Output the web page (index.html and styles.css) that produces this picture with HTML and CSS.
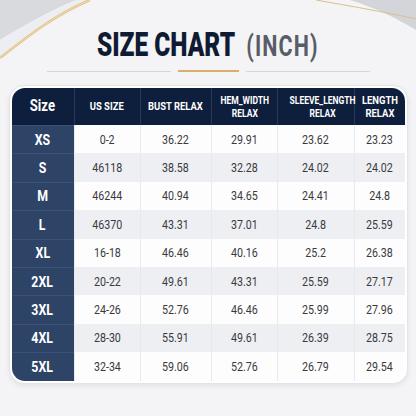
FILE: index.html
```html
<!DOCTYPE html>
<html lang="en">

<head>
  <meta charset="UTF-8">
  <meta name="viewport" content="width=device-width, initial-scale=1.0" />
  <title>Size Chart</title>
<link rel="stylesheet" href="styles.css">
</head>

<body>
  <svg class="swoosh" width="416" height="90" viewBox="0 0 416 90">
    <path d="M0 0 H76 C52 10 26 24 0 40 Z" fill="#d8dade" />
    <path d="M0 40 C26 24 52 10 76 0 H88 C56 14 28 34 0 58 Z" fill="#eceef1" />
    <path d="M0 58 C28 36 56 14 90 0" fill="none" stroke="#e0c185" stroke-width="2.5" />
    <path d="M0 58 C28 36 56 14 90 0" fill="none" stroke="#f4e4bf" stroke-width="0.8" />
    <path d="M350 0 H416 V30 C396 18 376 8 350 0 Z" fill="#d3d5da" />
    <path d="M316 0 C350 6 385 12 416 19" fill="none" stroke="#dcbf86" stroke-width="1" />
  </svg>

  <div class="page">
    <h1 class="title"><span class="title-text">SIZE CHART <span class="unit">(INCH)</span></span></h1>

    <div class="rule">
      <span class="rule-gray"></span>
      <span class="rule-gold"></span>
      <span class="rule-gray"></span>
    </div>

    <div class="card">
      <table class="chart">
        <colgroup>
          <col style="width:62px">
          <col style="width:66px">
          <col style="width:71px">
          <col style="width:66px">
          <col style="width:77px">
          <col style="width:51px">
        </colgroup>
        <thead>
          <tr>
            <th class="size-head"><span class="t">Size</span></th>
            <th><span class="t">US SIZE</span></th>
            <th><span class="t">BUST RELAX</span></th>
            <th><span class="t t-tight">HEM_WIDTH<br>RELAX</span></th>
            <th><span class="t t-tight">SLEEVE_LENGTH<br>RELAX</span></th>
            <th><span class="t">LENGTH<br>RELAX</span></th>
          </tr>
        </thead>
        <tbody>
          <tr><th><span class="t">XS</span></th><td><span class="t">0-2</span></td><td><span class="t">36.22</span></td><td><span class="t">29.91</span></td><td><span class="t">23.62</span></td><td><span class="t">23.23</span></td></tr>
          <tr><th><span class="t">S</span></th><td><span class="t">46118</span></td><td><span class="t">38.58</span></td><td><span class="t">32.28</span></td><td><span class="t">24.02</span></td><td><span class="t">24.02</span></td></tr>
          <tr><th><span class="t">M</span></th><td><span class="t">46244</span></td><td><span class="t">40.94</span></td><td><span class="t">34.65</span></td><td><span class="t">24.41</span></td><td><span class="t">24.8</span></td></tr>
          <tr><th><span class="t">L</span></th><td><span class="t">46370</span></td><td><span class="t">43.31</span></td><td><span class="t">37.01</span></td><td><span class="t">24.8</span></td><td><span class="t">25.59</span></td></tr>
          <tr><th><span class="t">XL</span></th><td><span class="t">16-18</span></td><td><span class="t">46.46</span></td><td><span class="t">40.16</span></td><td><span class="t">25.2</span></td><td><span class="t">26.38</span></td></tr>
          <tr><th><span class="t">2XL</span></th><td><span class="t">20-22</span></td><td><span class="t">49.61</span></td><td><span class="t">43.31</span></td><td><span class="t">25.59</span></td><td><span class="t">27.17</span></td></tr>
          <tr><th><span class="t">3XL</span></th><td><span class="t">24-26</span></td><td><span class="t">52.76</span></td><td><span class="t">46.46</span></td><td><span class="t">25.99</span></td><td><span class="t">27.96</span></td></tr>
          <tr><th><span class="t">4XL</span></th><td><span class="t">28-30</span></td><td><span class="t">55.91</span></td><td><span class="t">49.61</span></td><td><span class="t">26.39</span></td><td><span class="t">28.75</span></td></tr>
          <tr><th><span class="t">5XL</span></th><td><span class="t">32-34</span></td><td><span class="t">59.06</span></td><td><span class="t">52.76</span></td><td><span class="t">26.79</span></td><td><span class="t">29.54</span></td></tr>
        </tbody>
      </table>
    </div>
  </div>
</body>

</html>
```

FILE: styles.css
```css
* {
  box-sizing: border-box;
  margin: 0;
  padding: 0;
}

body {
  width: 416px;
  height: 416px;
  overflow: hidden;
  background: #f4f4f6;
  font-family: Roboto, 'Liberation Sans', sans-serif;
  position: relative;
}

.swoosh {
  position: absolute;
  top: 0;
  left: 0;
}

.page {
  position: relative;
  display: flex;
  flex-direction: column;
  align-items: center;
  padding-top: 27px;
}

.title {
  font-size: 33px;
  font-weight: 900;
  color: #0f1a33;
  line-height: 36px;
  white-space: nowrap;
}

.title-text {
  display: inline-block;
  transform: scaleX(0.74);
}

.unit {
  color: #585d68;
  font-size: 29px;
  font-weight: bold;
  letter-spacing: 1.5px;
  margin-left: 8px;
}

/* narrow look for the condensed type */
.t {
  display: inline-block;
  transform: scaleX(0.82);
  white-space: nowrap;
}

.t-tight {
  transform: scaleX(0.74);
}

.rule {
  display: flex;
  align-items: center;
  gap: 7px;
  margin-top: 6px;
}

.rule-gray {
  width: 124px;
  height: 1px;
  background: #d6d6da;
}

.rule-gold {
  width: 61px;
  height: 2px;
  background: #d9b06a;
}

.card {
  margin-top: 13px;
  background: #ffffff;
  border: 1px solid #e3e4e8;
  border-radius: 15px;
  padding: 2px;
  box-shadow: 0 2px 5px rgba(0, 0, 0, 0.08);
}

.chart {
  border-collapse: separate;
  border-spacing: 0;
  table-layout: fixed;
  width: 393px;
  border-radius: 13px;
  overflow: hidden;
}

.chart thead th {
  height: 37px;
  background: #0e1f3d;
  color: #ffffff;
  font-size: 11.5px;
  font-weight: bold;
  line-height: 12.5px;
  text-align: center;
  border-left: 1px solid #26385b;
}

.chart thead th:first-child {
  border-left: none;
}

.chart thead .size-head {
  font-size: 16px;
}

.chart tbody th {
  height: 28.4px;
  background: #2d4467;
  color: #ffffff;
  font-size: 15px;
  font-weight: bold;
  border-top: 1px solid #3b5276;
}

.chart tbody td {
  text-align: center;
  font-size: 13px;
  color: #3a3a3e;
  background: #fdfdfd;
  border-left: 1px solid #e8e9ec;
}

.chart tbody tr:nth-child(even) td {
  background: #eeeff3;
}
```
